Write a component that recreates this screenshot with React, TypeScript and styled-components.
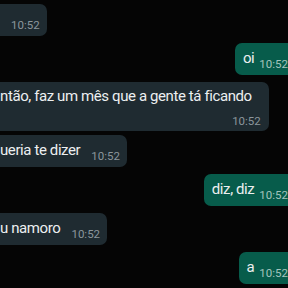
import React from "react";
import styled, { createGlobalStyle } from "styled-components";

const Global = createGlobalStyle`
  html, body { margin: 0; padding: 0; background: #050505; }
  body { font-family: Roboto, "Noto Sans", "Liberation Sans", sans-serif; }
`;

const Screen = styled.div`
  width: 288px;
  height: 288px;
  overflow: hidden;
  background: #050505;
`;

const Thread = styled.div`
  display: flex;
  flex-direction: column;
  margin: 0 -26px 0 -8px;
  padding-top: 4px;
`;

const Row = styled.div<{ $out?: boolean; $gap: number }>`
  display: flex;
  justify-content: ${(p) => (p.$out ? "flex-end" : "flex-start")};
  margin-top: ${(p) => p.$gap}px;
`;

const Bubble = styled.div<{ $out?: boolean; $stacked?: boolean }>`
  display: flex;
  flex-direction: ${(p) => (p.$stacked ? "column" : "row")};
  align-items: flex-end;
  gap: ${(p) => (p.$stacked ? 0 : p.$out ? 5 : 11)}px;
  background: ${(p) => (p.$out ? "#075c4b" : "#1f2b31")};
  border-radius: 7px;
  padding: ${(p) =>
    p.$stacked ? "4px 8px 3px 8px" : p.$out ? "5px 7px 7px 8px" : "5px 7px 7px 8px"};
`;

const Text = styled.div<{ $stacked?: boolean }>`
  color: #eceff0;
  font-size: 15px;
  letter-spacing: -0.4px;
  line-height: 20px;
  min-height: 20px;
  white-space: nowrap;
  align-self: flex-start;
  padding-right: ${(p) => (p.$stacked ? 9 : 0)}px;
`;

const Meta = styled.div<{ $stacked?: boolean }>`
  display: flex;
  align-items: center;
  gap: 3px;
  margin-bottom: ${(p) => (p.$stacked ? 0 : -3)}px;
  margin-top: ${(p) => (p.$stacked ? 8 : 0)}px;
`;

const Time = styled.span<{ $out?: boolean }>`
  font-size: 11.5px;
  line-height: 14px;
  color: ${(p) => (p.$out ? "#a3c4bd" : "#8b969c")};
`;

const Ticks = () => (
  <svg width="16" height="11" viewBox="0 0 16 11" fill="none">
    <path d="M1 6l3 3 6-8" stroke="#53bdeb" strokeWidth="1.5" />
    <path d="M7 8l1 1 6-8" stroke="#53bdeb" strokeWidth="1.5" />
  </svg>
);

type Msg = { text: string; out?: boolean; stacked?: boolean; gap: number };

const messages: Msg[] = [
  { text: "", gap: 0 },
  { text: "oi", out: true, gap: 7 },
  { text: "ntão, faz um mês que a gente tá ficando", stacked: true, gap: 7 },
  { text: "ueria te dizer", gap: 4 },
  { text: "diz, diz", out: true, gap: 7 },
  { text: "u namoro", gap: 7 },
  { text: "a", out: true, gap: 7 },
];

export default function App() {
  return (
    <Screen>
      <Global />
      <Thread>
        {messages.map((m, i) => (
          <Row key={i} $out={m.out} $gap={m.gap}>
            <Bubble $out={m.out} $stacked={m.stacked}>
              <Text $stacked={m.stacked}>{m.text}</Text>
              <Meta $stacked={m.stacked}>
                <Time $out={m.out}>10:52</Time>
                {m.out && <Ticks />}
              </Meta>
            </Bubble>
          </Row>
        ))}
      </Thread>
    </Screen>
  );
}
